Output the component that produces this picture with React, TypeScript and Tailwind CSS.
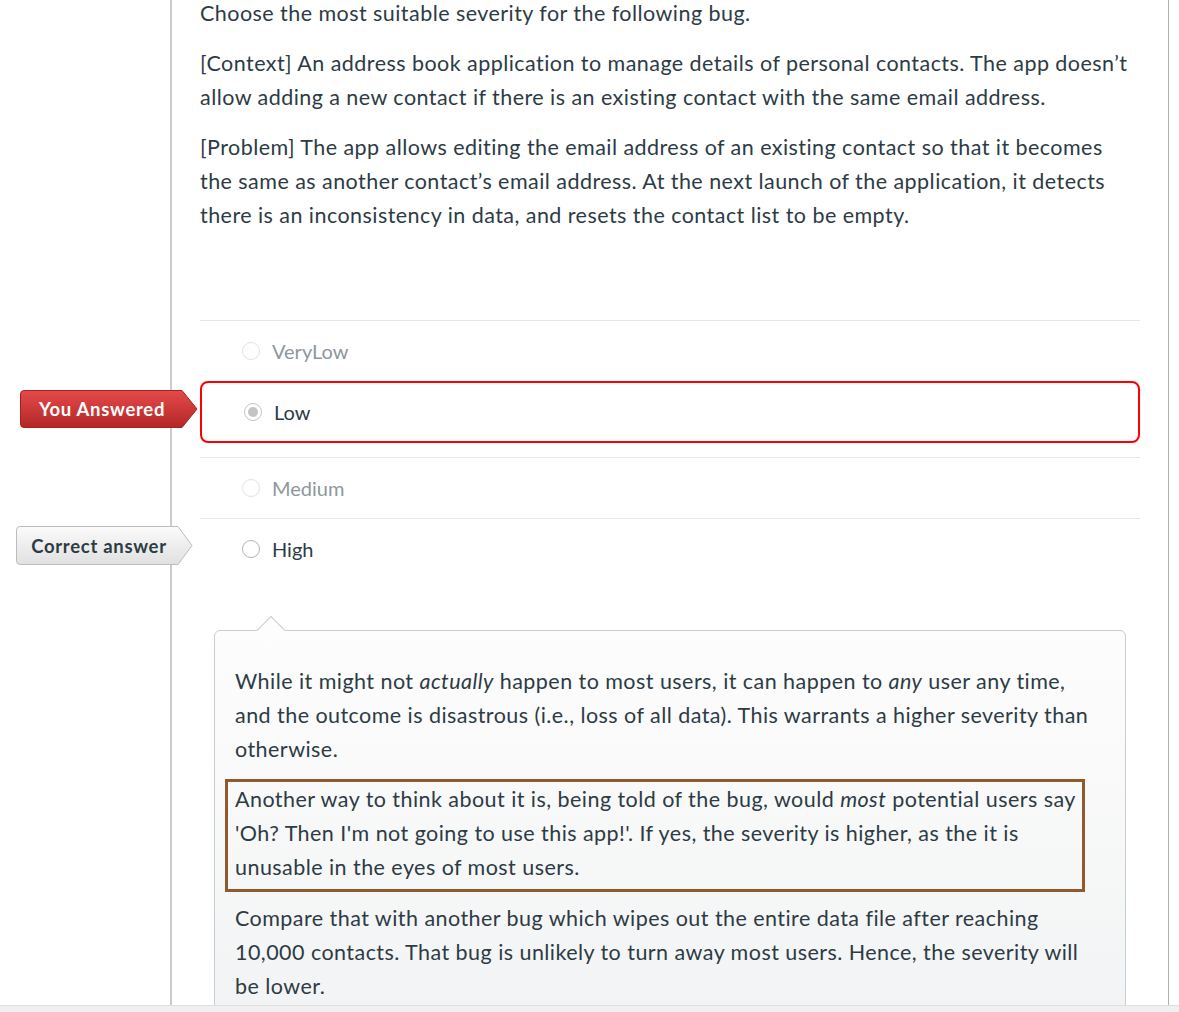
import React from 'react';

type Answer = {
  label: string;
  state: 'faded' | 'picked' | 'correct';
};

const answers: Answer[] = [
  { label: 'VeryLow', state: 'faded' },
  { label: 'Low', state: 'picked' },
  { label: 'Medium', state: 'faded' },
  { label: 'High', state: 'correct' },
];

const YouAnsweredBadge: React.FC = () => (
  <div className="absolute left-[-182px] top-[7px] h-[38px] w-[178px]">
    <svg width="178" height="38" viewBox="0 0 178 38" className="absolute inset-0">
      <defs>
        <linearGradient id="redg" x1="0" y1="0" x2="0" y2="1">
          <stop offset="0" stopColor="#e44a4a" />
          <stop offset="1" stopColor="#b42727" />
        </linearGradient>
      </defs>
      <path d="M4 0.5 H162 L177 19 L162 37.5 H4 Q0.5 37.5 0.5 34 V4 Q0.5 0.5 4 0.5 Z" fill="url(#redg)" stroke="#a52222" />
    </svg>
    <span className="relative flex h-full w-[164px] items-center justify-center text-[18.5px] font-bold tracking-[0.7px] text-white">
      You Answered
    </span>
  </div>
);

const CorrectBadge: React.FC = () => (
  <div className="absolute left-[-184px] top-[7px] h-[39px] w-[177px]">
    <svg width="177" height="39" viewBox="0 0 177 39" className="absolute inset-0">
      <defs>
        <linearGradient id="grayg" x1="0" y1="0" x2="0" y2="1">
          <stop offset="0" stopColor="#fbfbfb" />
          <stop offset="1" stopColor="#e0e0e0" />
        </linearGradient>
      </defs>
      <path d="M4 0.5 H162 L176 19.5 L162 38.5 H4 Q0.5 38.5 0.5 35 V4 Q0.5 0.5 4 0.5 Z" fill="url(#grayg)" stroke="#bcbcbc" />
    </svg>
    <span className="relative flex h-full w-[166px] items-center justify-center text-[18.5px] font-bold tracking-[0.7px] text-[#2d3b45]">
      Correct answer
    </span>
  </div>
);

const Radio: React.FC<{ state: Answer['state'] }> = ({ state }) => {
  if (state === 'picked') {
    return (
      <span className="flex h-[18px] w-[18px] items-center justify-center rounded-full border border-[#c4c4c4] bg-white">
        <span className="h-[10px] w-[10px] rounded-full bg-[#c4c4c4]" />
      </span>
    );
  }
  return (
    <span
      className={
        state === 'faded'
          ? 'h-[18px] w-[18px] rounded-full border border-[#e2e2e2] bg-white'
          : 'h-[18px] w-[18px] rounded-full border border-[#b4b4b4] bg-white'
      }
    />
  );
};

const AnswerRow: React.FC<{ answer: Answer }> = ({ answer }) => {
  if (answer.state === 'picked') {
    return (
      <div className="relative mb-[14px] flex h-[62px] items-center rounded-lg border-2 border-[#ff0000] pl-[42px]">
        <YouAnsweredBadge />
        <Radio state="picked" />
        <span className="ml-[12px] text-[20px] text-[#2d3b45]">{answer.label}</span>
      </div>
    );
  }
  return (
    <div className="relative flex h-[61px] items-center border-t border-[#e6e6e6] pl-[42px]">
      {answer.state === 'correct' && <CorrectBadge />}
      <Radio state={answer.state} />
      <span
        className={
          answer.state === 'faded'
            ? 'ml-[12px] text-[20px] text-[#8d979e]'
            : 'ml-[12px] text-[20px] text-[#2d3b45]'
        }
      >
        {answer.label}
      </span>
    </div>
  );
};

const App: React.FC = () => {
  return (
    <div className="relative flex h-[1012px] w-[1179px] flex-col overflow-hidden bg-white font-[Lato,sans-serif] text-[20px] leading-[34px] text-[#2d3b45]">
      <div className="min-h-0 flex-1 overflow-hidden">
        <div className="ml-[170px] mr-[10px] border-l-2 border-r border-l-[#cbcbcb] border-r-[#b0b0b0] pb-10 pl-[28px] pr-[28px]">
          <div className="mt-[-4px] flex flex-col gap-[16px] text-[21.5px] tracking-[0.45px]">
            <p>Choose the most suitable severity for the following bug.</p>
            <p>
              [Context] An address book application to manage details of personal contacts. The app doesn’t allow
              adding a new contact if there is an existing contact with the same email address.
            </p>
            <p>
              [Problem] The app allows editing the email address of an existing contact so that it becomes the same
              as another contact’s email address. At the next launch of the application, it detects there is an
              inconsistency in data, and resets the contact list to be empty.
            </p>
          </div>

          <div className="mt-[88px]">
            {answers.map((a) => (
              <AnswerRow key={a.label} answer={a} />
            ))}
          </div>

          <div className="relative mx-[14px] mt-[51px] rounded-md border border-[#c7cdd1] bg-gradient-to-b from-[#fdfdfd] to-[#f2f3f4] pb-6 pl-[20px] pr-[30px] pt-[33px] text-[21.5px] tracking-[0.45px]">
            <span className="absolute left-[46px] top-[-11px] h-[20px] w-[20px] rotate-45 border-l border-t border-[#c7cdd1] bg-[#fdfdfd]" />
            <p>
              While it might not <em>actually</em> happen to most users, it can happen to <em>any</em> user any
              time, and the outcome is disastrous (i.e., loss of all data). This warrants a higher severity than
              otherwise.
            </p>
            <div className="ml-[-10px] mt-[13px] w-[860px] border-[3px] border-[#8e5a2e] pb-[5px] pl-[7px]">
              Another way to think about it is, being told of the bug, would <em>most</em> potential users say 'Oh?
              Then I'm not going to use this app!'. If yes, the severity is higher, as the it is unusable in the eyes
              of most users.
            </div>
            <p className="mt-[9px]">
              Compare that with another bug which wipes out the entire data file after reaching 10,000 contacts.
              That bug is unlikely to turn away most users. Hence, the severity will be lower.
            </p>
          </div>
        </div>
      </div>
      <div className="h-[7px] w-full shrink-0 border-t border-[#dedede] bg-[#f0f0f0]" />
    </div>
  );
};

export default App;
